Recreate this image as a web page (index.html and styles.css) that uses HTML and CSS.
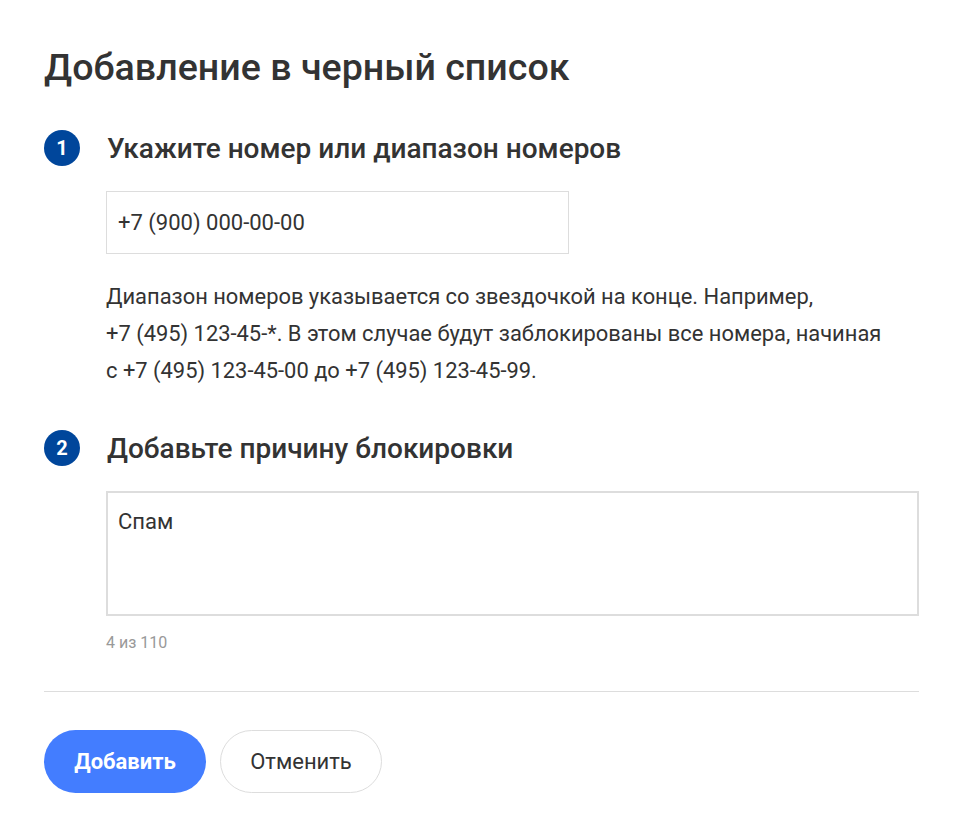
FILE: index.html
```html
<!DOCTYPE html>
<html lang="ru">

<head>
    <meta charset="UTF-8">
    <title>Добавление в черный список</title>
    <link rel="stylesheet" href="styles.css">
</head>

<body>

    <div class="page">

        <h1 class="title">Добавление в черный список</h1>

        <!-- шаг 1 -->
        <div class="step">
            <span class="step-num">1</span>
            <h2 class="step-title">Укажите номер или диапазон номеров</h2>
        </div>
        <div class="step-body">
            <div class="field field-phone">+7 (900) 000-00-00</div>
            <p class="hint">Диапазон номеров указывается со звездочкой на конце. Например,<br>
                +7 (495) 123-45-*. В этом случае будут заблокированы все номера, начиная<br>
                с +7 (495) 123-45-00 до +7 (495) 123-45-99.</p>
        </div>

        <!-- шаг 2 -->
        <div class="step">
            <span class="step-num">2</span>
            <h2 class="step-title">Добавьте причину блокировки</h2>
        </div>
        <div class="step-body">
            <div class="field field-reason">Спам</div>
            <div class="counter">4 из 110</div>
        </div>

        <div class="divider"></div>

        <div class="buttons">
            <button class="btn btn-primary">Добавить</button>
            <button class="btn btn-default">Отменить</button>
        </div>

    </div>

</body>

</html>
```

FILE: styles.css
```css
* {
    padding: 0;
    margin: 0;
    box-sizing: border-box;
}

body {
    font-family: Roboto, "Noto Sans", Arial, sans-serif;
    color: #333;
    background: #fff;
}

.page {
    width: 962px;
    padding: 45px 43px 0 44px;
}

.title {
    font-size: 37.6px;
    line-height: 44px;
    font-weight: 500;
    color: #333;
}

.step {
    display: flex;
    align-items: center;
    height: 36px;
    margin-top: 41px;
}

.step-num {
    width: 36px;
    height: 36px;
    border-radius: 50%;
    background: #00469b;
    color: #fff;
    font-size: 20px;
    font-weight: 700;
    line-height: 36px;
    text-align: center;
}

.step-title {
    margin-left: 27px;
    font-size: 28px;
    font-weight: 500;
    color: #333;
}

.step-body {
    padding-left: 62px;
}

.field {
    border: 1px solid #ddd;
    font-size: 22px;
    color: #333;
}

.field-phone {
    width: 463px;
    height: 63px;
    margin-top: 25px;
    padding: 0 11px;
    line-height: 61px;
}

.hint {
    margin-top: 24px;
    font-size: 21.9px;
    line-height: 37px;
    color: #333;
}

.field-reason {
    height: 125px;
    margin-top: 25px;
    padding: 16px 10px;
    border-width: 2px;
    line-height: 26px;
}

.counter {
    margin-top: 17px;
    font-size: 16px;
    color: #999;
}

.divider {
    height: 1px;
    background: #ddd;
    margin-top: 39px;
}

.buttons {
    display: flex;
    gap: 14px;
    margin-top: 38px;
}

.btn {
    width: 162px;
    height: 63px;
    border-radius: 32px;
    font-family: Roboto, "Noto Sans", Arial, sans-serif;
    font-size: 22px;
    cursor: pointer;
}

.btn-primary {
    background: #437dff;
    border: 0;
    color: #fff;
    font-weight: 700;
}

.btn-default {
    background: #fff;
    border: 1px solid #ddd;
    color: #333;
    font-weight: 400;
}
```
